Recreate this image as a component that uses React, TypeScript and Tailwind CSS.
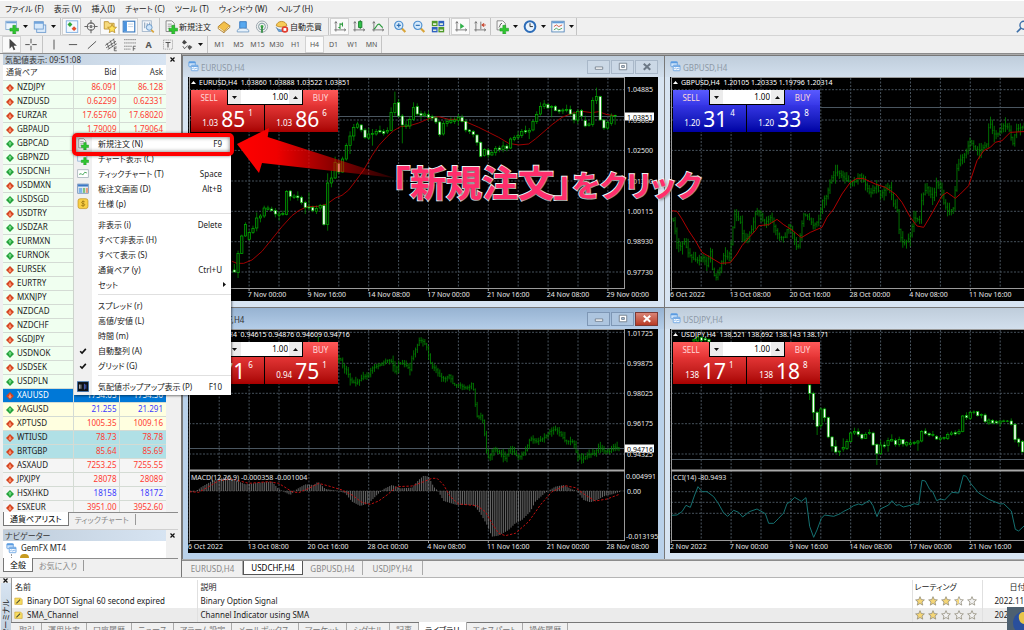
import type { ReactNode } from "react";
import clsx from "clsx";

/* ---------- data ---------- */

type Quote = { s: string; up?: boolean; bid?: string; ask?: string; tone?: "gold" | "oil" | "index" | "selected" };

const QUOTES: Quote[] = [
  { s: "NZDJPY", bid: "86.091", ask: "86.128" },
  { s: "NZDUSD", bid: "0.62299", ask: "0.62331" },
  { s: "EURZAR", bid: "17.65760", ask: "17.68020" },
  { s: "GBPAUD", bid: "1.79009", ask: "1.79064" },
  { s: "GBPCAD", up: true },
  { s: "GBPNZD", up: true },
  { s: "USDCNH", up: true },
  { s: "USDMXN" },
  { s: "USDSGD", up: true },
  { s: "USDTRY" },
  { s: "USDZAR", up: true },
  { s: "EURMXN", up: true },
  { s: "EURNOK", up: true },
  { s: "EURSEK" },
  { s: "EURTRY" },
  { s: "MXNJPY" },
  { s: "NZDCAD" },
  { s: "NZDCHF" },
  { s: "SGDJPY" },
  { s: "USDNOK", up: true },
  { s: "USDSEK" },
  { s: "USDPLN", up: true },
  { s: "XAUUSD", bid: "1754.05", ask: "1754.50", tone: "selected" },
  { s: "XAGUSD", up: true, bid: "21.255", ask: "21.291", tone: "gold" },
  { s: "XPTUSD", bid: "1005.35", ask: "1009.16", tone: "gold" },
  { s: "WTIUSD", bid: "78.73", ask: "78.78", tone: "oil" },
  { s: "BRTGBP", bid: "85.64", ask: "85.69", tone: "oil" },
  { s: "ASXAUD", bid: "7253.25", ask: "7255.55", tone: "index" },
  { s: "JPXJPY", bid: "28078", ask: "28089", tone: "index" },
  { s: "HSXHKD", up: true, bid: "18158", ask: "18172", tone: "index" },
  { s: "ESXEUR", bid: "3951.00", ask: "3952.60", tone: "index" },
];

// [high, low, body top, body bottom, falling]
type Candle = [number, number, number, number, number];

const EUR: Candle[] = [
  [630, 655, 648, 654, 1], [590, 672, 598, 655, 0], [542, 600, 546, 598, 0], [505, 548, 512, 546, 0],
  [530, 560, 536, 556, 0], [515, 540, 524, 536, 0], [475, 532, 492, 522, 0], [480, 505, 486, 492, 0],
  [455, 492, 462, 486, 0], [455, 470, 462, 466, 0], [458, 472, 465, 470, 1], [462, 490, 470, 480, 1],
  [472, 500, 480, 484, 0], [470, 485, 478, 482, 0], [408, 484, 413, 482, 0], [408, 440, 411, 427, 1],
  [420, 435, 426, 430, 0], [412, 440, 426, 431, 1], [425, 452, 430, 446, 1], [440, 480, 446, 460, 1],
  [415, 470, 459, 462, 1], [455, 475, 460, 470, 1], [455, 480, 463, 473, 0], [450, 470, 455, 462, 0],
  [450, 515, 455, 512, 1], [358, 530, 387, 512, 0], [350, 400, 372, 387, 0], [308, 375, 325, 372, 0],
  [318, 360, 328, 354, 1], [308, 356, 315, 354, 0], [268, 320, 275, 315, 0], [232, 300, 246, 275, 0],
  [210, 260, 220, 246, 0], [203, 225, 210, 220, 0], [210, 235, 213, 228, 1], [222, 255, 228, 250, 1],
  [222, 258, 240, 252, 0], [225, 275, 238, 242, 0], [225, 245, 232, 240, 0], [215, 238, 230, 234, 1],
  [225, 245, 232, 238, 1], [220, 240, 230, 234, 0], [160, 232, 175, 230, 0], [113, 185, 148, 175, 0],
  [135, 190, 145, 186, 1], [180, 268, 186, 213, 1], [200, 225, 213, 217, 0], [188, 225, 196, 216, 0],
  [145, 200, 160, 196, 0], [148, 185, 158, 180, 1], [170, 195, 178, 184, 1], [172, 190, 180, 185, 0],
  [170, 200, 182, 190, 1], [182, 200, 188, 192, 1], [188, 210, 192, 204, 1], [200, 248, 204, 242, 1],
  [200, 245, 208, 240, 0], [195, 218, 202, 208, 0], [190, 210, 200, 205, 0], [190, 210, 198, 202, 0],
  [180, 215, 190, 200, 0], [182, 205, 190, 202, 1], [195, 235, 202, 228, 1], [225, 240, 228, 232, 1],
  [228, 250, 233, 241, 1], [240, 275, 243, 266, 1], [262, 310, 265, 307, 1], [283, 308, 287, 305, 0],
  [282, 312, 288, 303, 1], [290, 305, 296, 303, 0], [276, 305, 283, 296, 0], [275, 295, 282, 287, 1],
  [262, 295, 276, 287, 0], [270, 292, 276, 284, 1], [250, 285, 255, 282, 0], [244, 262, 250, 256, 0],
  [232, 258, 244, 250, 0], [225, 252, 232, 244, 0], [215, 240, 230, 234, 1], [222, 255, 229, 234, 0],
  [198, 232, 203, 228, 0], [172, 210, 181, 203, 0], [145, 185, 157, 180, 0], [138, 165, 150, 158, 0],
  [148, 165, 152, 162, 1], [153, 190, 158, 160, 0], [153, 172, 157, 170, 1], [165, 180, 168, 172, 1],
  [163, 180, 168, 171, 0], [152, 175, 167, 170, 0], [155, 185, 166, 180, 1], [172, 208, 180, 198, 1],
  [165, 210, 172, 198, 0], [165, 195, 170, 186, 1], [185, 220, 200, 216, 1], [205, 218, 210, 215, 0],
  [130, 218, 140, 212, 0], [101, 150, 128, 140, 0], [125, 200, 128, 198, 1], [195, 228, 198, 222, 1],
  [200, 228, 206, 222, 0], [178, 215, 186, 208, 0], [182, 212, 184, 186, 0],
];

const JPY: Candle[] = [
  [240, 285, 240, 265, 1], [260, 345, 265, 322, 1], [318, 390, 322, 364, 1], [308, 370, 312, 362, 0],
  [308, 350, 312, 338, 1], [335, 400, 338, 396, 1], [393, 440, 396, 424, 1], [405, 445, 424, 441, 1],
  [438, 453, 438, 441, 0], [400, 440, 428, 432, 0], [402, 435, 410, 430, 0], [380, 412, 384, 410, 0],
  [368, 390, 380, 384, 0], [370, 395, 380, 388, 1], [385, 405, 388, 400, 1], [382, 402, 388, 400, 0],
  [373, 390, 382, 386, 0], [380, 422, 384, 420, 1], [415, 480, 418, 446, 1], [405, 450, 420, 446, 0],
  [410, 430, 420, 424, 1], [398, 440, 406, 422, 0], [388, 410, 404, 408, 0], [400, 425, 406, 418, 1],
  [395, 425, 404, 418, 0], [402, 425, 404, 417, 1], [408, 425, 412, 420, 0], [405, 422, 414, 418, 0],
  [408, 420, 412, 416, 0], [405, 437, 408, 414, 0], [375, 412, 380, 408, 0], [370, 390, 378, 386, 1],
  [382, 395, 386, 390, 1], [378, 395, 388, 392, 0], [390, 405, 394, 402, 1], [395, 410, 399, 404, 0],
  [395, 405, 398, 401, 0], [382, 405, 388, 400, 0], [378, 392, 384, 388, 0], [376, 392, 383, 387, 1],
  [372, 390, 380, 385, 0], [330, 382, 333, 380, 0], [322, 345, 332, 338, 1], [318, 345, 322, 340, 0],
  [316, 328, 321, 323, 0], [318, 335, 320, 332, 1], [325, 340, 328, 332, 0], [325, 355, 330, 350, 1],
  [340, 360, 345, 354, 0], [342, 358, 346, 354, 1], [345, 358, 350, 354, 1], [345, 365, 348, 354, 0],
  [344, 352, 348, 350, 0], [345, 352, 348, 350, 0], [340, 362, 348, 358, 1], [355, 412, 358, 404, 1],
  [398, 425, 402, 412, 1], [405, 442, 410, 441, 1],
];

const JPY_TOP: Candle[] = [
  [104, 110, 104, 108, 0], [94, 110, 96, 108, 0], [94, 112, 98, 106, 1], [98, 110, 101, 105, 1], [100, 112, 104, 110, 1],
];

type Pt = [number, number];

const GBP: Pt[] = [
  [28, 490], [40, 500], [50, 565], [60, 580], [72, 560], [85, 600], [100, 615], [115, 620], [130, 610], [140, 635],
  [152, 590], [158, 660], [168, 670], [180, 640], [190, 605], [205, 610], [215, 560], [222, 480], [240, 500],
  [250, 560], [262, 550], [275, 525], [288, 470], [300, 475], [312, 510], [330, 490], [345, 525], [358, 550],
  [375, 550], [385, 510], [400, 545], [412, 590], [420, 545], [430, 480], [445, 490], [460, 515], [475, 500],
  [487, 440], [500, 425], [512, 375], [530, 352], [545, 365], [560, 380], [575, 385], [590, 380], [600, 362],
  [612, 385], [630, 420], [650, 395], [660, 425], [675, 405], [690, 400], [700, 450], [712, 470], [718, 540],
  [730, 570], [742, 560], [750, 545], [762, 490], [778, 500], [785, 430], [800, 400], [820, 435], [828, 385],
  [840, 400], [852, 450], [865, 475], [882, 460], [888, 350], [900, 320], [915, 300], [930, 260], [945, 285],
  [960, 290], [980, 270], [988, 200], [1000, 240], [1015, 240], [1030, 215], [1045, 220], [1058, 270],
  [1068, 225], [1100, 215],
];

const CHF: Pt[] = [
  [471, 165], [480, 158], [490, 190], [500, 195], [512, 230], [528, 235], [540, 225], [550, 215], [565, 212],
  [575, 190], [600, 180], [620, 165], [635, 170], [645, 200], [655, 175], [675, 178], [690, 195], [695, 160],
  [708, 130], [718, 105], [730, 110], [742, 130], [748, 165], [755, 185], [765, 190], [780, 215], [795, 222],
  [808, 210], [820, 240], [840, 240], [855, 250], [870, 245], [877, 230], [884, 290], [892, 340], [905, 330],
  [912, 370], [917, 430], [925, 460], [940, 430], [960, 445], [975, 460], [990, 430], [1005, 450], [1020, 455],
  [1035, 440], [1050, 400], [1070, 410], [1090, 400], [1108, 380], [1125, 372], [1140, 385], [1155, 408],
  [1180, 410], [1190, 450], [1205, 465], [1220, 450], [1245, 445], [1255, 425], [1275, 440], [1290, 440],
  [1300, 425], [1316, 430],
];

const MACD: Pt[] = [
  [22, 562], [40, 560], [60, 545], [90, 528], [130, 515], [160, 525], [190, 538], [230, 533], [270, 530], [290, 552],
  [325, 570], [345, 552], [370, 538], [395, 540], [408, 530], [430, 552], [470, 558], [490, 565], [510, 590],
  [535, 603], [560, 595], [585, 570], [605, 552], [630, 540], [655, 550], [690, 548], [710, 525], [725, 512],
  [740, 515], [755, 545], [768, 558], [785, 588], [824, 600], [875, 600], [895, 625], [915, 660], [930, 695],
  [950, 692], [980, 675], [1000, 655], [1020, 645], [1045, 620], [1060, 590], [1090, 563], [1120, 545],
  [1145, 540], [1170, 553], [1185, 558], [1205, 585], [1225, 592], [1245, 585], [1270, 572], [1290, 568], [1316, 560],
];

const MA_EUR =
  "150,622 165,628 185,628 210,618 240,592 270,555 300,518 330,485 350,470 375,458 410,457 435,450 460,432 480,424 500,408 520,382 545,348 570,305 590,275 615,248 635,230 655,218 680,216 710,207 740,194 770,188 800,196 829,196 860,207 890,220 920,235 950,250 980,268 1010,273 1040,270 1060,255 1080,238 1110,212 1140,190 1170,178 1200,172 1230,176 1250,173 1275,182 1300,185";
const MA_GBP =
  "28,470 45,472 60,495 80,530 100,560 120,595 145,610 175,628 205,626 225,600 240,575 260,552 280,530 290,515 320,512 345,496 365,512 390,528 418,551 445,535 480,520 495,490 515,465 540,420 565,385 585,373 605,374 640,390 670,400 700,420 720,445 745,490 765,516 785,520 800,495 820,460 840,425 855,415 880,433 895,420 920,395 945,320 965,290 985,280 1000,265 1020,260 1045,235 1100,232";
const SIGNAL =
  "22,560 50,562 80,545 110,527 150,522 200,535 260,530 290,535 330,560 350,563 380,550 410,535 440,543 480,555 510,570 540,592 565,598 590,588 615,570 645,545 690,543 720,532 750,520 765,520 785,540 805,575 830,597 885,602 910,620 930,655 950,685 970,692 1000,685 1040,650 1075,600 1110,560 1150,542 1180,548 1210,570 1240,588 1275,582 1312,568";
const CCI =
  "28,631 45,630 60,620 72,601 85,607 98,570 108,545 120,560 135,560 155,575 170,597 185,624 197,634 215,616 230,622 242,636 262,620 285,612 310,626 320,655 335,655 350,640 365,624 375,596 385,590 398,577 418,589 432,578 443,664 455,697 465,675 478,640 488,630 515,634 535,626 545,619 560,612 575,602 590,597 600,600 622,586 633,602 645,635 655,612 680,600 690,587 702,601 712,599 724,606 745,601 757,596 770,599 780,526 790,528 803,553 812,560 824,587 835,582 848,585 870,562 890,564 904,511 913,514 925,534 950,564 980,583 1015,597 1025,596 1048,618 1060,673 1070,678 1100,650";

/* ---------- chart drawing ---------- */

function valueAt(pts: Pt[], x: number) {
  for (let i = 1; i < pts.length; i++) {
    const [x0, y0] = pts[i - 1];
    const [x1, y1] = pts[i];
    if (x <= x1) return y0 + ((y1 - y0) * (x - x0)) / (x1 - x0);
  }
  return pts[pts.length - 1][1];
}

const rnd = (n: number) => {
  const v = Math.sin(n * 12.9898) * 43758.5453;
  return v - Math.floor(v);
};

function Candles({ data, x }: { data: Candle[]; x: number }) {
  return (
    <g stroke="#00b800" strokeWidth={2}>
      {data.map(([hi, lo, top, bot, falling], i) => {
        const cx = x + i * 11.2;
        return (
          <g key={i}>
            <path d={`M${cx} ${hi}V${lo}`} stroke="#00a800" />
            <rect x={cx - 3.4} y={top} width={6.8} height={Math.max(bot - top, 2)} fill={falling ? "#fff" : "#001a00"} />
          </g>
        );
      })}
    </g>
  );
}

function Bars({ pts, spread }: { pts: Pt[]; spread: number }) {
  const start = pts[0][0];
  const count = Math.floor((pts[pts.length - 1][0] - start) / 5.6);
  let d = "";
  for (let i = 0; i <= count; i++) {
    const x = start + i * 5.6;
    const y = valueAt(pts, x);
    const next = valueAt(pts, x + 5.6);
    // every few bars gets a long wick
    const reach = rnd(i + 7) > 0.75 ? spread * 1.6 : spread;
    const hi = Math.min(y, next) - rnd(i + 1) * reach - 2;
    const lo = Math.max(y, next) + rnd(i + 90) * reach + 2;
    d += `M${x} ${hi}V${lo}M${x - 2} ${y}h2M${x} ${next}h2`;
  }
  return <path d={d} stroke="#008a00" strokeWidth={2.4} fill="none" />;
}

function Histogram() {
  let d = "";
  for (let x = 24; x < 1312; x += 5.6) d += `M${x} 558V${valueAt(MACD, x)}`;
  return <path d={d} stroke="#8c8c8c" strokeWidth={2.2} />;
}

type ChartProps = {
  header: string;
  dates: string[];
  firstDate?: number;
  rows: number[];
  prices?: [number, string][];
  lastPrice: number;
  lastLabel?: string;
  split?: boolean;
  children: ReactNode;
  origin: string;
  overlay?: ReactNode;
};

const COLUMNS = Array.from({ length: 15 }, (_, i) => 1.3 + i * 29.9);

function Chart({ header, dates, firstDate = 0, rows, prices = [], lastPrice, lastLabel, split, children, origin, overlay }: ChartProps) {
  return (
    <svg width="470" height="224" viewBox="0 0 470 224" className="block max-w-none" fontFamily="'Noto Sans', sans-serif" fontSize="7">
      <g stroke="#47525c" strokeWidth="1" strokeDasharray="2 1.5" fill="none">
        {COLUMNS.map((x) => (
          <path key={x} d={`M${x} 1V211`} />
        ))}
        {rows.map((y) => (
          <path key={y} d={`M1 ${y}H436`} />
        ))}
      </g>
      <path d={`M1 ${lastPrice}H436`} stroke="#4a5660" />
      <g transform={origin} fill="none">
        {children}
      </g>
      <path d="M1 0.5H436.5M1.5 0V212M436.5 0V212M1 211.5H437" stroke="#9a9a9a" fill="none" />
      <path d={COLUMNS.filter((_, i) => i % 2 === 0).map((x) => `M${x} 211v3`).join("")} stroke="#9a9a9a" />
      {split && <path d="M1 141.5H437" stroke="#a8a8a8" strokeWidth="2" />}
      <path d="M3 7h5l-2.500-3z" fill="#fff" />
      <text x="11" y="8" fill="#fff" xmlSpace="preserve">{header}</text>
      <g fill="#e8e8e8">
        {dates.map((d, i) => (
          <text key={d} x={(firstDate + i) * 59.8} y="220">{d}</text>
        ))}
        {prices.map(([y, p]) => (
          <text key={p} x={split && p.length > 7 ? 438 : 439} y={y}>{p}</text>
        ))}
      </g>
      {lastLabel && (
        <g>
          <rect x="437" y={lastPrice - 4} width="29" height="8" fill="#fff" />
          <text x="439" y={lastPrice + 3} fill="#000">{lastLabel}</text>
        </g>
      )}
      {overlay}
    </svg>
  );
}

/* ---------- one click trading ---------- */

function PriceButton({ side, parts, tone }: { side: string; parts: string[]; tone: string }) {
  return (
    <button aria-label={side} className={clsx("flex h-[27px] flex-1 items-end justify-center gap-[3px] pb-[5px] text-white", tone)}>
      <span className="text-[8px] leading-[8px]">{parts[0]}</span>
      <span className="text-[21px] leading-[16px]">{parts[1]}</span>
      <span className="self-start pt-[4px] text-[8px] leading-[8px]">{parts[2]}</span>
    </button>
  );
}

function TradePanel({ symbol, sell, buy, blue }: { symbol: string; sell: string[]; buy: string[]; blue?: boolean }) {
  const top = blue ? "bg-linear-to-b from-[#5a5aff] to-[#3838e8]" : "bg-linear-to-b from-[#ff5a5a] to-[#e63636]";
  const bottom = blue ? "bg-linear-to-b from-[#3535e4] to-[#0000a4]" : "bg-linear-to-b from-[#e43535] to-[#a80000]";
  return (
    <div className="absolute left-[3px] top-[13px] w-[147px] bg-black">
      <div className="flex h-[15px]">
        <button className={clsx("w-[36px] text-[8px] leading-[14px] text-[#ffd9d9]", top)}>SELL</button>
        <div className="mx-px mb-px flex flex-1 bg-white text-black">
          <button aria-label="ロットを減らす" className="flex w-[13px] items-center justify-center bg-[#ececec]"><Caret /></button>
          <input aria-label={`${symbol} ロット数`} defaultValue="1.00" className="w-0 flex-1 pr-px text-right text-[8px]" />
          <button aria-label="ロットを増やす" className="flex w-[13px] items-center justify-center bg-[#ececec]"><Caret up /></button>
        </div>
        <button className={clsx("w-[35px] text-[8px] leading-[14px] text-[#ffd9d9]", top)}>BUY</button>
      </div>
      <div className="flex gap-px">
        <PriceButton side="SELL" parts={sell} tone={bottom} />
        <PriceButton side="BUY" parts={buy} tone={bottom} />
      </div>
    </div>
  );
}

/* ---------- icons ---------- */

function Caret({ up }: { up?: boolean }) {
  return (
    <svg width="5" height="3" viewBox="0 0 5 3" aria-hidden="true">
      <path d={up ? "M0 3h5L2.500 0z" : "M0 0h5L2.500 3z"} fill="#111" />
    </svg>
  );
}

const PLUS = <path d="M9 6.500h3.500V10H16v3.500h-3.500V17H9v-3.500H5.500V10H9z" fill="#2fc52f" stroke="#1b8f22" strokeWidth="0.600" />;
const AXES = <path d="M3 2v12M1 12h14M1.500 4L3 2l1.500 2M13 10.500l2 1.500-2 1.500" stroke="#666" fill="none" />;

const ICONS: Record<string, ReactNode> = {
  newChart: <><rect x="0.500" y="1.500" width="13" height="10" fill="#eef6fd" stroke="#7fa8d2" /><path d="M1 3h12" stroke="#6d9fd4" strokeWidth="2" />{PLUS}</>,
  profiles: <><rect x="4" y="6" width="11" height="9" fill="#dcebfa" stroke="#6596cc" /><rect x="1" y="2" width="11" height="9" fill="#d8e9fa" stroke="#6596cc" /><path d="M1 3.500h11" stroke="#6ba0da" strokeWidth="2" /></>,
  watch: <><rect x="1" y="1" width="14" height="14" fill="#f2f8ff" stroke="#74a6dd" /><path d="M5.500 2.500l3 3-3 3-3-3z" fill="#2fa83a" /><path d="M10.500 7.500l3 3-3 3-3-3z" fill="#e4522f" /></>,
  target: <g stroke="#666" strokeWidth="1.300" fill="none"><circle cx="8" cy="8" r="4.500" /><circle cx="8" cy="8" r="1.200" /><path d="M8 0v5M8 11v5M0 8h5M11 8h5" /></g>,
  star: <><path d="M1 2h5l1 2h6v7H1z" fill="#f6da7d" stroke="#b98d26" /><path d="M10.500 5l1.600 3.500 3.800.4-2.800 2.600.8 3.800-3.400-1.900-3.400 1.900.8-3.800L5.100 8.900l3.800-.4z" fill="#ffe35c" stroke="#b98d26" /></>,
  data: <><rect x="1" y="1.500" width="14" height="13" fill="#fff" stroke="#3a7abf" strokeWidth="1.400" /><path d="M1.500 2h4v12h-4z" fill="#4a93df" /><path d="M7 5h6M7 8h6" stroke="#b9cde0" /></>,
  tester: <><rect x="1" y="1" width="11" height="13" fill="#f3f6fa" stroke="#9db2c8" /><path d="M4 3v7M7 4v7M10 3v5" stroke="#6e8aa8" /><circle cx="9.500" cy="9" r="3.500" fill="#cfe6fb" stroke="#5a8cc0" /><path d="M12 12l3 3" stroke="#d9a53a" strokeWidth="2" /></>,
  order: <><path d="M2 1h7l3 3v10H2z" fill="#f8f8f8" stroke="#777" /><path d="M4 5h5M4 7.500h5M4 10h3" stroke="#888" />{PLUS}</>,
  book: <><path d="M1 8l7-6 7 5-7 7z" fill="#f3c04a" stroke="#a8741a" /><path d="M1 8v2.500l7 5V14M15 7v2l-7 6" fill="#fff2cc" stroke="#a8741a" /></>,
  user: <><path d="M4 2h8v8H4z" fill="#56a8ef" stroke="#2c73bd" /><path d="M1 13c0-4 14-4 14 0v1.500H1z" fill="#e6f1fb" stroke="#6f98c0" /></>,
  signal: <g fill="none"><circle cx="8" cy="8" r="6.800" stroke="#9aa6ad" strokeWidth="1.200" /><circle cx="8" cy="8" r="4.200" stroke="#7f9aa0" strokeWidth="1.200" /><circle cx="8" cy="8" r="1.800" fill="#44b04b" /><path d="M8 8v7.500" stroke="#2a8a38" strokeWidth="2" /></g>,
  auto: <><path d="M1 9c3 4 10 4 13 0l-2 5H4z" fill="#6aa7dd" stroke="#3b70a5" strokeWidth="0.700" /><path d="M1 7c1-7 12-7 13 0-4 2-9 2-13 0z" fill="#f7cb57" stroke="#b88420" /><circle cx="11.500" cy="11.500" r="4" fill="#e23b2e" /><rect x="9.800" y="9.800" width="3.400" height="3.400" fill="#fff" /></>,
  bars: <>{AXES}<path d="M8 4v7M6 9h2M8 5h3M11 3v5" stroke="#2b9a3d" strokeWidth="1.300" fill="none" /></>,
  candle: <>{AXES}<path d="M9.500 0v11" stroke="#157a27" /><rect x="7.500" y="2" width="4" height="7" fill="#2fc048" stroke="#157a27" /></>,
  line: <>{AXES}<path d="M3 11c3-1 3-6 6-6 2 0 2 3 5 4" stroke="#2b9a3d" strokeWidth="1.300" fill="none" /></>,
  zoomIn: <><path d="M10 10l4.500 4.500" stroke="#d9a53a" strokeWidth="2.600" /><circle cx="6.500" cy="6.500" r="5" fill="#d5eafc" stroke="#4f90cf" strokeWidth="1.400" /><path d="M4 6.500h5M6.500 4v5" stroke="#2f6fb2" strokeWidth="1.400" /></>,
  zoomOut: <><path d="M10 10l4.500 4.500" stroke="#d9a53a" strokeWidth="2.600" /><circle cx="6.500" cy="6.500" r="5" fill="#d5eafc" stroke="#4f90cf" strokeWidth="1.400" /><path d="M4 6.500h5" stroke="#2f6fb2" strokeWidth="1.400" /></>,
  tiles: <><rect x="0.500" y="1" width="7" height="6.500" fill="#4f9a2b" /><rect x="8.500" y="1" width="7" height="6.500" fill="#2f62c0" /><rect x="0.500" y="8.500" width="7" height="6.500" fill="#2f62c0" /><rect x="8.500" y="8.500" width="7" height="6.500" fill="#4f9a2b" /><path d="M2 4h4v2H2zM10 4h4v2h-4zM2 11.500h4v2H2zM10 11.500h4v2h-4z" fill="#e2f0d8" /></>,
  scroll: <>{AXES}<path d="M7 4l5 3.500L7 11z" fill="#2fb048" /></>,
  shift: <>{AXES}<path d="M9 2v9" stroke="#666" /><path d="M15 6h-4m2-2l-2.500 2L13 8" stroke="#c8442c" strokeWidth="1.300" fill="none" /></>,
  indicator: <><path d="M2 1h7l3 3v8H2z" fill="#f8f8f8" stroke="#777" /><path d="M4 9c2 0 1-5 4-5" stroke="#444" fill="none" />{PLUS}</>,
  clock: <><circle cx="8" cy="8" r="6.500" fill="#eaf4fd" stroke="#2c6cb8" strokeWidth="2.400" /><path d="M8 4v4h3.500" stroke="#333" strokeWidth="1.200" fill="none" /></>,
  template: <><rect x="0.500" y="1.500" width="15" height="13" fill="#f6f9fc" stroke="#4a7fb5" /><path d="M1 3h14" stroke="#5f9bd8" strokeWidth="2" /><path d="M3 8l3-2 3 2 4-2" stroke="#c8442c" fill="none" /><path d="M3 12l3-2 3 2 4-2" stroke="#3a9a48" fill="none" /></>,
  cursor: <path d="M5 1v12l3-3 2 5 2-1-2-4.500h4z" fill="#444" />,
  cross: <path d="M8 1v5.500M8 9.500V15M1 8h5.500M9.500 8H15" stroke="#555" strokeWidth="1.200" />,
  vline: <path d="M8 2v12" stroke="#555" strokeWidth="1.200" />,
  hline: <path d="M3 8h10" stroke="#555" strokeWidth="1.200" />,
  trend: <path d="M3 13L13 4" stroke="#555" strokeWidth="1.200" />,
  channel: <g stroke="#555" fill="none"><path d="M1 9L12 1M2 12L14 4M4 14L15 7M3 6l3 7M7 3l3 8M11 1l2 7" /><path d="M15 11h-3v4.500h3M12 13h2.500" /></g>,
  fibo: <g stroke="#555" fill="none"><path d="M1 2h14M1 6h14M1 10h10M1 13.500h8" strokeDasharray="1.500 1" /><path d="M15 10h-3v5.500M12 13h2.500" /></g>,
  textT: <g fill="none" stroke="#999"><rect x="2.500" y="2.500" width="11" height="11" strokeDasharray="1.500 1" /><path d="M5 5.500h6M8 5.500v6" stroke="#555" strokeWidth="1.300" /></g>,
  arrows: <><path d="M4.500 2l3.500 3.500L4.500 8 2 5.500z" fill="#444" /><path d="M11 8.500l3.500 2.500-3.500 3.500L8.500 11z" fill="#555" /><path d="M3 10l2 3 4-4" stroke="#444" fill="none" /></>,
  windows: <><rect x="0.800" y="0.800" width="10" height="8" rx="1" fill="#cfe4fa" stroke="#5b9be0" strokeWidth="1.200" /><path d="M1 2.500h10" stroke="#5b9be0" strokeWidth="2" /><rect x="4.500" y="6.500" width="10.500" height="8.500" rx="1" fill="#f2f8ff" stroke="#5b9be0" strokeWidth="1.200" /><path d="M5 8h10" stroke="#5b9be0" strokeWidth="2" /><path d="M6 12l2-1 2 1.500 2-1.500 2 1" stroke="#5b9be0" fill="none" /></>,
  tick: <><rect x="0.500" y="2.500" width="15" height="11" fill="#fff" stroke="#9aa7b0" /><path d="M2.500 9l3-1 2 2 3-4 3 1" stroke="#2f9a45" fill="none" strokeWidth="1.200" /></>,
  depth: <><rect x="0.500" y="1.500" width="15" height="13" fill="#e8eef4" stroke="#5a7fae" /><path d="M1 3.500h14" stroke="#3c78c4" strokeWidth="3" /><path d="M2 7h5v7H2z" fill="#7fb3e6" /><path d="M8 7h3v7H8z" fill="#7ec27c" /><path d="M12 7h3v7h-3z" fill="#e89b7f" /></>,
  spec: <><rect x="1" y="1" width="14" height="14" rx="3" fill="#f9cf45" stroke="#c1921d" /><path d="M10.500 5.500c-2-1.500-5-.5-4.500 1.200.5 1.600 4.500.8 4.500 2.800 0 1.800-3 2-5 .8M8 3.500v9" stroke="#8f6a0c" fill="none" /></>,
  popup: <><rect x="0" y="1" width="16" height="14" fill="#0d1014" stroke="#3b77bb" /><path d="M3 5v6M5 5v6" stroke="#e8e8e8" /><path d="M10 4v8M12 5v6" stroke="#5e7cff" /></>,
  check: <path d="M2 9l4 4 8-9" stroke="#111" strokeWidth="3.400" fill="none" />,
  script: <><path d="M1 2h11l3 3v9H1z" fill="#f7dc63" stroke="#c59b24" /><path d="M4 12l7-7" stroke="#4b4b30" strokeWidth="2" /></>,
};

function Icon({ name, size = 14 }: { name: string; size?: number }) {
  return (
    <svg width={size} height={size} viewBox="0 0 16 17" className="shrink-0" aria-hidden="true">
      {ICONS[name]}
    </svg>
  );
}

/* ---------- toolbars ---------- */

function Tool({ name, label, pressed, drop }: { name: string; label: string; pressed?: boolean; drop?: boolean }) {
  return (
    <>
      <button
        aria-label={label}
        className={clsx("flex w-[19px] items-center justify-center", pressed && "border border-[#d2d2d2] bg-[#fafafa]")}
      >
        <Icon name={name} />
      </button>
      {drop && (
        <button aria-label={`${label} メニュー`} className="flex w-[9px] items-center justify-center">
          <Caret />
        </button>
      )}
    </>
  );
}

const Sep = ({ wide }: { wide?: boolean }) => (
  <div className={clsx("flex justify-center", wide ? "w-[4px]" : "w-[3px]")}>
    <div className="w-px bg-[#c4c4c4]" />
  </div>
);

const MENUS = ["ファイル (F)", "表示 (V)", "挿入(I)", "チャート (C)", "ツール (T)", "ウィンドウ (W)", "ヘルプ (H)"];
const PERIODS = ["M1", "M5", "M15", "M30", "H1", "H4", "D1", "W1", "MN"];

function Toolbars() {
  return (
    <header className="shrink-0 border-b border-[#8c8c8c] bg-[#f0f0f0]">
      <nav className="flex h-[17px] items-center gap-[10px] border-t border-white pl-[5px]">
        {MENUS.map((m) => (
          <button key={m} className="whitespace-nowrap">{m}</button>
        ))}
      </nav>
      <div className="flex h-[18px] justify-between border-t border-[#d4d4d4]">
        <div className="flex border-r border-[#c4c4c4] pl-[2px]">
          <Tool name="newChart" label="新規チャート" drop />
          <Tool name="profiles" label="プロファイル" drop />
          <Sep wide />
          <Tool name="watch" label="気配値表示" pressed />
          <Tool name="target" label="データウィンドウ" />
          <Tool name="star" label="ナビゲーター" pressed />
          <Tool name="data" label="ターミナル" pressed />
          <Tool name="tester" label="ストラテジーテスター" />
          <Sep wide />
          <button className="flex w-[53px] items-center gap-px pl-[3px] whitespace-nowrap">
            <Icon name="order" />新規注文
          </button>
          <Tool name="book" label="MetaEditor" />
          <Tool name="user" label="マーケット" />
          <Tool name="signal" label="シグナル" />
          <button className="flex w-[55px] items-center gap-px pl-[4px] whitespace-nowrap">
            <Icon name="auto" />自動売買
          </button>
          <Sep wide />
          <Tool name="bars" label="バーチャート" pressed />
          <Tool name="candle" label="ローソク足" />
          <Tool name="line" label="ラインチャート" />
          <Sep />
          <Tool name="zoomIn" label="拡大" />
          <Tool name="zoomOut" label="縮小" />
          <Tool name="tiles" label="整列" />
          <Sep wide />
          <Tool name="scroll" label="自動スクロール" pressed />
          <Tool name="shift" label="チャートシフト" />
          <Sep />
          <Tool name="indicator" label="インディケータ" drop />
          <Tool name="clock" label="時間足" drop />
          <Tool name="template" label="定型チャート" drop />
        </div>
        <button aria-label="検索" className="flex w-[8px] items-center overflow-hidden">
          <svg width="14" height="14" viewBox="0 0 16 16" className="shrink-0" aria-hidden="true">
            <circle cx="9" cy="6" r="4.500" fill="none" stroke="#3b6ea8" strokeWidth="1.600" />
            <path d="M6 9l-5 5" stroke="#3b6ea8" strokeWidth="2" />
          </svg>
        </button>
      </div>
      <div className="flex h-[18px] border-t border-[#d4d4d4]">
        <div className="flex pl-[2px]">
          <Tool name="cursor" label="カーソル" pressed />
          <Tool name="cross" label="クロスヘア" />
          <Sep wide />
          <Tool name="vline" label="垂直線" />
          <Tool name="hline" label="水平線" />
          <Tool name="trend" label="トレンドライン" />
          <Tool name="channel" label="チャネル" />
          <Tool name="fibo" label="フィボナッチ" />
          <button className="w-[19px] text-[9px] font-bold text-[#555]">A</button>
          <Tool name="textT" label="テキストラベル" />
          <Tool name="arrows" label="矢印" drop />
          <Sep wide />
        </div>
        <div className="flex border-r border-[#c4c4c4] pl-px">
          {PERIODS.map((p) => (
            <button
              key={p}
              className={clsx("w-[19px] text-center text-[7px] text-[#555]", p === "H4" && "border border-[#d2d2d2] bg-[#fafafa]")}
            >
              {p}
            </button>
          ))}
        </div>
      </div>
    </header>
  );
}

/* ---------- left side ---------- */

function Diamond({ up }: { up?: boolean }) {
  return (
    <svg width="8" height="8" viewBox="0 0 16 16" className="inline-block align-middle" aria-hidden="true">
      <path d="M8 0l8 8-8 8-8-8z" fill={up ? "#22a03a" : "#d4431f"} />
      <path d={up ? "M8 3l4 4H9.500v4h-3V7H4z" : "M8 13l4-4H9.500V5h-3v4H4z"} fill={up ? "#7be08a" : "#ff9a78"} />
    </svg>
  );
}

function PanelTitle({ children }: { children: ReactNode }) {
  return (
    <div className="flex shrink-0">
      <h2 className="flex-1 bg-linear-to-r from-[#bfcddb] to-[#d7e4f2] pl-[2px] text-[8px] leading-[11px] text-[#333]">{children}</h2>
      <CloseButton />
    </div>
  );
}

function CloseButton() {
  return (
    <button aria-label="閉じる" className="flex w-[12px] items-center justify-center">
      <svg width="5" height="5" viewBox="0 0 5 5" aria-hidden="true"><path d="M0.500 0.500l4 4M4.500 0.500l-4 4" stroke="#111" strokeWidth="1.200" /></svg>
    </button>
  );
}

function PanelTabs({ tabs }: { tabs: string[] }) {
  return (
    <div className="flex h-[14px] shrink-0 border-t border-[#8c8c8c] leading-[12px]">
      {tabs.map((t, i) => (
        <button
          key={t}
          className={clsx(
            "px-[6px] whitespace-nowrap",
            i === 0 ? "-mt-px border-x border-b border-[#777] bg-white text-black" : "my-px border-r border-[#999] text-[#888]",
          )}
        >
          {t}
        </button>
      ))}
    </div>
  );
}

function MarketWatch() {
  return (
    <section className="flex min-h-0 flex-1 flex-col">
      <PanelTitle>気配値表示: 09:51:08</PanelTitle>
      <div className="min-h-0 flex-1 overflow-hidden pr-[12px]">
        <table className="w-full table-fixed border-collapse">
          <thead>
            <tr className="h-[15px] bg-white text-[#333]">
              <th className="border-r border-[#ddd] pl-[3px] text-left font-normal">通貨ペア</th>
              <th className="w-[46px] border-r border-[#ddd] pr-[2px] text-right font-normal">Bid</th>
              <th className="w-[47px] pr-[3px] text-right font-normal">Ask</th>
            </tr>
          </thead>
          <tbody>
            {QUOTES.map((q) => {
              const price = q.tone === "selected" ? "text-white" : q.up ? "text-[#3a3aff]" : "text-[#ff3c32]";
              return (
                <tr
                  key={q.s}
                  className={clsx(
                    "h-[14px] border-t border-[#d4dbd4] leading-[12px]",
                    !q.tone && "bg-[#f0fff0]",
                    q.tone === "gold" && "bg-[#ffffe0]",
                    q.tone === "oil" && "bg-[#b0e0e6]",
                    q.tone === "index" && "bg-[#f5f5f5]",
                    q.tone === "selected" ? "bg-[#0078d7] text-white" : "text-[#222]",
                  )}
                >
                  <td className="border-r border-[#d4dbd4] p-0 pl-[3px] whitespace-nowrap">
                    <Diamond up={q.up} />
                    <span className="pl-[3px]">{q.s}</span>
                  </td>
                  <td className={clsx("border-r border-[#d4dbd4] p-0 pr-[2px] text-right", price)}>{q.bid}</td>
                  <td className={clsx("p-0 pr-[3px] text-right", price)}>{q.ask}</td>
                </tr>
              );
            })}
          </tbody>
        </table>
      </div>
      <PanelTabs tabs={["通貨ペアリスト", "ティックチャート"]} />
    </section>
  );
}

function Navigator() {
  return (
    <section className="mt-[3px] shrink-0 border-t border-[#d0d0d0]">
      <PanelTitle>ナビゲーター</PanelTitle>
      <div className="mr-[12px] h-[17px] overflow-hidden bg-white pt-px pl-[3px]">
        <div className="flex items-center gap-[4px] text-[#222]">
          <Icon name="windows" size={11} />GemFX MT4
        </div>
        <div className="ml-[5px] h-[6px] w-[18px] border-l border-dotted border-[#999] pl-[8px]">
          <div className="h-[4px] w-[9px] rounded-t-sm bg-[#c79a1e]" />
        </div>
      </div>
      <PanelTabs tabs={["全般", "お気に入り"]} />
    </section>
  );
}

/* ---------- chart windows ---------- */

type WindowProps = { title: string; active?: boolean; controls?: boolean; children: ReactNode };

function ChartWindow({ title, active, controls, children }: WindowProps) {
  return (
    <section
      className={clsx(
        "flex min-w-0 flex-col overflow-hidden border-t border-l border-[#777]",
        active ? "bg-[#b9d1ea]" : "bg-[#d7e4f2]",
      )}
    >
      <div
        className={clsx(
          "flex h-[21px] items-center bg-linear-to-b pr-[6px] pl-[5px]",
          active ? "from-[#97b3d2] to-[#b4cde8]" : "from-[#bfcddb] to-[#d2dfed]",
        )}
      >
        <Icon name="windows" size={11} />
        <h3 className={clsx("flex-1 pt-[3px] pl-[2px]", active ? "text-[#333]" : "text-[#8d99a6]")}>{title}</h3>
        {controls && (
          <div className="flex gap-px">
            <WinButton label="最小化" active={active}><path d="M4 7.500h8v2.500H4z" /></WinButton>
            <WinButton label="最大化" active={active}><path d="M4 3.500h8v7H4zM6.500 6h3v2h-3z" /></WinButton>
            <WinButton label="閉じる" active={active} danger={active}><path d="M4.500 4l7 6.500M11.500 4l-7 6.500" strokeWidth="2.200" /></WinButton>
          </div>
        )}
      </div>
      <div className={clsx("relative ml-[5px] h-[224px] overflow-hidden bg-black", controls && "mr-[6px]")}>{children}</div>
    </section>
  );
}

function WinButton({ label, active, danger, children }: { label: string; active?: boolean; danger?: boolean; children: ReactNode }) {
  return (
    <button
      aria-label={label}
      className={clsx(
        "flex h-[14px] w-[23px] items-center justify-center border",
        danger ? "border-[#7b3a35] bg-linear-to-b from-[#d98476] to-[#b83a24]" : active ? "border-[#7e97b5] bg-[#adc5df]" : "border-[#a9b8c9] bg-[#cbd8e6]",
      )}
    >
      <svg width="16" height="13" viewBox="0 0 16 14" fill="#fff" stroke={danger ? "#fff" : "#6c7886"} strokeWidth="0.900" fillRule="evenodd" aria-hidden="true">
        {children}
      </svg>
    </button>
  );
}

const UPPER_ROWS = [12.7, 43, 73.4, 104, 134.3, 164.7, 195];
const LOWER_ROWS = [3.3, 34.3, 64.3, 94.7, 125];

function Desktop() {
  return (
    <div className="grid min-h-0 flex-1 grid-cols-[482fr_360fr] grid-rows-2 bg-[#ababab] py-px">
      <ChartWindow title="EURUSD,H4" controls>
        <Chart
          header="EURUSD,H4  1.03860 1.03888 1.03522 1.03851"
          dates={["7 Nov 00:00", "9 Nov 16:00", "14 Nov 08:00", "17 Nov 00:00", "21 Nov 16:00", "24 Nov 08:00", "29 Nov 00:00"]}
          firstDate={1}
          rows={UPPER_ROWS}
          prices={[[15, "1.04885"], [46, "1.03685"], [76, "1.02500"], [107, "1.01300"], [137, "1.00115"], [167, "0.98930"], [198, "0.97730"]]}
          lastPrice={39.5}
          lastLabel="1.03851"
          origin="translate(-6 -23) scale(0.33333)"
        >
          <polyline points={MA_EUR} stroke="#a00000" strokeWidth="3" />
          <Candles data={EUR} x={157} />
        </Chart>
        <TradePanel symbol="EURUSD" sell={["1.03", "85", "1"]} buy={["1.03", "86", "6"]} />
      </ChartWindow>

      <ChartWindow title="GBPUSD,H4">
        <Chart
          header="GBPUSD,H4  1.20105 1.20335 1.19796 1.20314"
          dates={["6 Oct 2022", "13 Oct 08:00", "20 Oct 16:00", "28 Oct 00:00", "4 Nov 08:00", "11 Nov 16:00"]}
          rows={UPPER_ROWS}
          lastPrice={30.5}
          origin="translate(-8 -23) scale(0.33333)"
        >
          <Bars pts={GBP} spread={15} />
          <polyline points={MA_GBP} stroke="#b00000" strokeWidth="3" />
        </Chart>
        <TradePanel symbol="GBPUSD" sell={["1.20", "31", "4"]} buy={["1.20", "33", "8"]} blue />
      </ChartWindow>

      <ChartWindow title="USDCHF,H4" active controls>
        <Chart
          header="USDCHF,H4  0.94615 0.94876 0.94609 0.94716"
          dates={["6 Oct 2022", "13 Oct 08:00", "20 Oct 16:00", "28 Oct 00:00", "4 Nov 08:00", "11 Nov 16:00", "21 Nov 00:00", "28 Nov 08:00"]}
          rows={LOWER_ROWS}
          prices={[[7, "1.01725"], [37, "0.99875"], [67, "0.98025"], [97, "0.96175"], [128, "0.94325"], [150, "0.004991"], [165, "0.00"], [210, "-0.013195"]]}
          lastPrice={119.5}
          lastLabel="0.94716"
          split
          origin="translate(-6 -24) scale(0.33333)"
          overlay={<text x="3" y="151" fill="#e4e4e4">MACD(12,26,9) -0.000358 -0.001004</text>}
        >
          <path d="M409 95v18" stroke="#009a00" strokeWidth="2.600" />
          <Bars pts={CHF} spread={10} />
          <path d="M22 558H1328" stroke="#555" strokeWidth="2" strokeDasharray="6 4" />
          <Histogram />
          <polyline points={SIGNAL} stroke="#c01010" strokeWidth="3" strokeDasharray="7 5" />
        </Chart>
        <TradePanel symbol="USDCHF" sell={["0.94", "71", "6"]} buy={["0.94", "75", "1"]} />
      </ChartWindow>

      <ChartWindow title="USDJPY,H4">
        <Chart
          header="USDJPY,H4  138.521 138.692 138.143 138.171"
          dates={["2 Nov 2022", "7 Nov 00:00", "9 Nov 16:00", "14 Nov 08:00", "17 Nov 00:00", "21 Nov 16:00"]}
          rows={[...LOWER_ROWS, 162.7, 173.3, 184.3]}
          lastPrice={130.5}
          split
          origin="translate(-8 -24) scale(0.33333)"
          overlay={<text x="3" y="151" fill="#e4e4e4">CCI(14) -80.9493</text>}
        >
          <Candles data={JPY_TOP} x={96} />
          <Candles data={JPY} x={443} />
          <polyline points={CCI} stroke="#157070" strokeWidth="3" />
        </Chart>
        <TradePanel symbol="USDJPY" sell={["138", "17", "1"]} buy={["138", "18", "8"]} />
      </ChartWindow>
    </div>
  );
}

function ChartTabs() {
  return (
    <div className="flex h-[17px] shrink-0 border-t border-[#8c8c8c] pl-px leading-[13px]">
      {["EURUSD,H4", "USDCHF,H4", "GBPUSD,H4", "USDJPY,H4"].map((t) => (
        <button
          key={t}
          className={clsx(
            "mb-[2px] w-[60px] border-r",
            t === "USDCHF,H4" ? "border-b border-l border-[#555] bg-white text-black" : "border-[#aaa] text-[#888]",
          )}
        >
          {t}
        </button>
      ))}
    </div>
  );
}

/* ---------- terminal ---------- */

function Stars({ value }: { value: number }) {
  return (
    <span className="flex gap-[3px]" role="img" aria-label={`${value} / 5`}>
      {[0, 1, 2, 3, 4].map((i) => (
        <svg key={i} width="10" height="10" viewBox="0 0 16 16" aria-hidden="true">
          <path
            d="M8 1l2 4.700 5 .5-3.800 3.400 1.200 5L8 12l-4.400 2.600 1.200-5L1 6.200l5-.5z"
            fill={i < Math.floor(value) ? "#f5d676" : "#f1f1f1"}
            stroke="#8f8a78"
            strokeWidth="1.200"
          />
          {value - i === 0.5 && <path d="M8 2v9.500l-3.300 2 .9-4L2.500 6.600l4-.5z" fill="#f5d676" />}
        </svg>
      ))}
    </span>
  );
}

const LIBRARY = [
  { name: "Binary DOT Signal 60 second expired", text: "Binary Option Signal", stars: 3.5, date: "2022.11.28" },
  { name: "SMA_Channel", text: "Channel Indicator using SMA", stars: 2, date: "2022.11.28" },
];

const TERMINAL_TABS = ["取引", "運用比率", "口座履歴", "ニュース", "アラーム設定", "メールボックス", "マーケット", "シグナル", "記事", "ライブラリ", "エキスパート", "操作履歴"];

function Terminal() {
  return (
    <section className="flex h-[53px] shrink-0 overflow-hidden border-t border-[#b5b5b5]">
      <div className="flex w-[11px] shrink-0 flex-col items-center">
        <div className="flex h-[9px]"><CloseButton /></div>
        <div className="h-[60px] w-[10px] bg-linear-to-t from-[#bfcddb] to-[#d7e4f2] pt-[16px]">
          <span className="block text-[8px] leading-[10px] [writing-mode:sideways-lr]">ターミナル</span>
        </div>
      </div>
      <div className="min-w-0 flex-1">
        <div className="h-[44px] overflow-hidden border-l border-[#999] bg-white pt-[2px]">
          <table className="w-full table-fixed border-collapse text-[#222]">
            <thead>
              <tr className="h-[14px]">
                <th className="w-[185px] border-r border-[#e0e0e0] p-0 pl-[3px] text-left font-normal">名前</th>
                <th className="border-r border-[#e0e0e0] p-0 pl-[3px] text-left font-normal">説明</th>
                <th className="w-[70px] border-r border-[#e0e0e0] p-0 pl-[2px] text-left font-normal">レーティング</th>
                <th className="w-[42px] p-0 pl-[27px] text-left font-normal whitespace-nowrap">日付</th>
              </tr>
            </thead>
            <tbody>
              {LIBRARY.map((row, i) => (
                <tr key={row.name} className={clsx("h-[14px]", i === 1 && "bg-[#ebebeb]")}>
                  <td className="border-r border-[#e0e0e0] p-0 pl-[2px]">
                    <span className="flex items-center gap-[4px] whitespace-nowrap"><Icon name="script" size={9} />{row.name}</span>
                  </td>
                  <td className="border-r border-[#e0e0e0] p-0 pl-[3px]">{row.text}</td>
                  <td className="border-r border-[#e0e0e0] p-0 pl-[2px]"><Stars value={row.stars} /></td>
                  <td className="p-0 pl-[12px] whitespace-nowrap">{row.date}</td>
                </tr>
              ))}
            </tbody>
          </table>
        </div>
        <div className="flex h-[14px] border-t border-[#777] pl-[2px] text-[#777]">
          {TERMINAL_TABS.map((t) => (
            <button
              key={t}
              className={clsx("border-r border-[#aaa] px-[6px] leading-[13px] whitespace-nowrap", t === "ライブラリ" && "-mt-px bg-white text-black")}
            >
              {t}
              {t === "メールボックス" && <sub className="text-[6px] text-red-600">7</sub>}
            </button>
          ))}
        </div>
      </div>
    </section>
  );
}

/* ---------- context menu ---------- */

type Item = { label: string; key?: string; icon?: string; sub?: boolean };

const MENU_GROUPS: Item[][] = [
  [
    { label: "新規注文 (N)", key: "F9", icon: "order" },
    { label: "チャート表示 (C)", icon: "newChart" },
    { label: "ティックチャート (T)", key: "Space", icon: "tick" },
    { label: "板注文画面 (D)", key: "Alt+B", icon: "depth" },
    { label: "仕様 (p)", icon: "spec" },
  ],
  [
    { label: "非表示 (i)", key: "Delete" },
    { label: "すべて非表示 (H)" },
    { label: "すべて表示 (S)" },
    { label: "通貨ペア (y)", key: "Ctrl+U" },
    { label: "セット", sub: true },
  ],
  [
    { label: "スプレッド (r)" },
    { label: "高値/安値 (L)" },
    { label: "時間 (m)" },
    { label: "自動整列 (A)", icon: "check" },
    { label: "グリッド (G)", icon: "check" },
  ],
  [{ label: "気配値ポップアップ表示 (P)", key: "F10", icon: "popup" }],
];

function ContextMenu() {
  return (
    <div role="menu" className="absolute top-[135px] left-[74px] w-[157px] bg-white bg-linear-to-r from-[#f0f0f0] from-[18px] to-white to-[18px] py-px text-[#222] shadow-[1px_1px_2px_rgba(0,0,0,0.5)]">
      {MENU_GROUPS.map((group, g) => (
        <div key={g}>
          {g > 0 && <div role="separator" className="mt-[2px] mb-[3px] ml-[24px] h-px bg-[#e0e0e0]" />}
          {group.map((item) => (
            <button key={item.label} role="menuitem" className="flex h-[15px] w-full items-center pr-[9px] text-left whitespace-nowrap">
              <span className="flex w-[18px] shrink-0 justify-center">
                {item.icon && <Icon name={item.icon} size={item.icon === "check" ? 8 : 12} />}
              </span>
              <span className="flex-1 pl-[6px]">{item.label}</span>
              {item.key && <span>{item.key}</span>}
              {item.sub && <svg width="3" height="5" viewBox="0 0 3 5" className="-mr-[4px]" aria-hidden="true"><path d="M0 0v5l3-2.500z" fill="#111" /></svg>}
            </button>
          ))}
        </div>
      ))}
    </div>
  );
}

function Callout() {
  return (
    <div className="pointer-events-none absolute inset-0">
      <div className="absolute top-[133px] left-[72px] h-[23px] w-[162px] rounded-[5px] border-4 border-[#ff0000] shadow-[0_0_3px_rgba(0,0,0,0.5),inset_0_0_4px_rgba(0,0,0,0.6)]" />
      <svg width="160" height="56" viewBox="0 0 160 56" className="absolute top-[127px] left-[237px]" aria-hidden="true">
        <defs>
          <linearGradient id="fade" x1="0" x2="1">
            <stop offset="0" stopColor="#ff0000" />
            <stop offset="0.250" stopColor="#f00000" />
            <stop offset="1" stopColor="#e00000" stopOpacity="0.150" />
          </linearGradient>
        </defs>
        <path d="M0 17L32 1l-1.300 9L158 51 25 36l-3 10z" fill="url(#fade)" />
      </svg>
      <p className="absolute top-[160px] left-[392px] text-[36px] leading-[48px] font-bold whitespace-nowrap text-[#ff2e6c] [paint-order:stroke_fill] [-webkit-text-stroke:2px_#fff] [text-shadow:1px_1px_3px_rgba(0,0,0,0.6)]">
        「新規注文」<span className="text-[29px]">をクリック</span>
      </p>
    </div>
  );
}

export default function App() {
  return (
    <div className="relative flex h-screen w-full flex-col overflow-hidden bg-[#f0f0f0] font-['Noto_Sans','Noto_Sans_CJK_JP',sans-serif] text-[8px] leading-[12px] text-[#222] [font-feature-settings:'palt']">
      <Toolbars />
      <main className="flex min-h-0 flex-1">
        <aside className="flex w-[181px] shrink-0 flex-col pr-[3px] pb-[5px] pl-[3px]">
          <MarketWatch />
          <Navigator />
        </aside>
        <div className="flex min-w-0 flex-1 flex-col border-l border-[#777]">
          <Desktop />
          <ChartTabs />
        </div>
      </main>
      <Terminal />
      <ContextMenu />
      <Callout />
      <div className="absolute right-0 bottom-0 h-[23px] w-[17px] overflow-hidden bg-[#4d6070]">
        <svg width="17" height="23" viewBox="0 0 17 23" aria-hidden="true">
          <circle cx="18" cy="16" r="12" fill="#2a4f9c" />
          <path d="M12 8c2-4 5-3 5-3v12c-3 0-6-4-5-9z" fill="#e9c54a" />
        </svg>
      </div>
    </div>
  );
}
